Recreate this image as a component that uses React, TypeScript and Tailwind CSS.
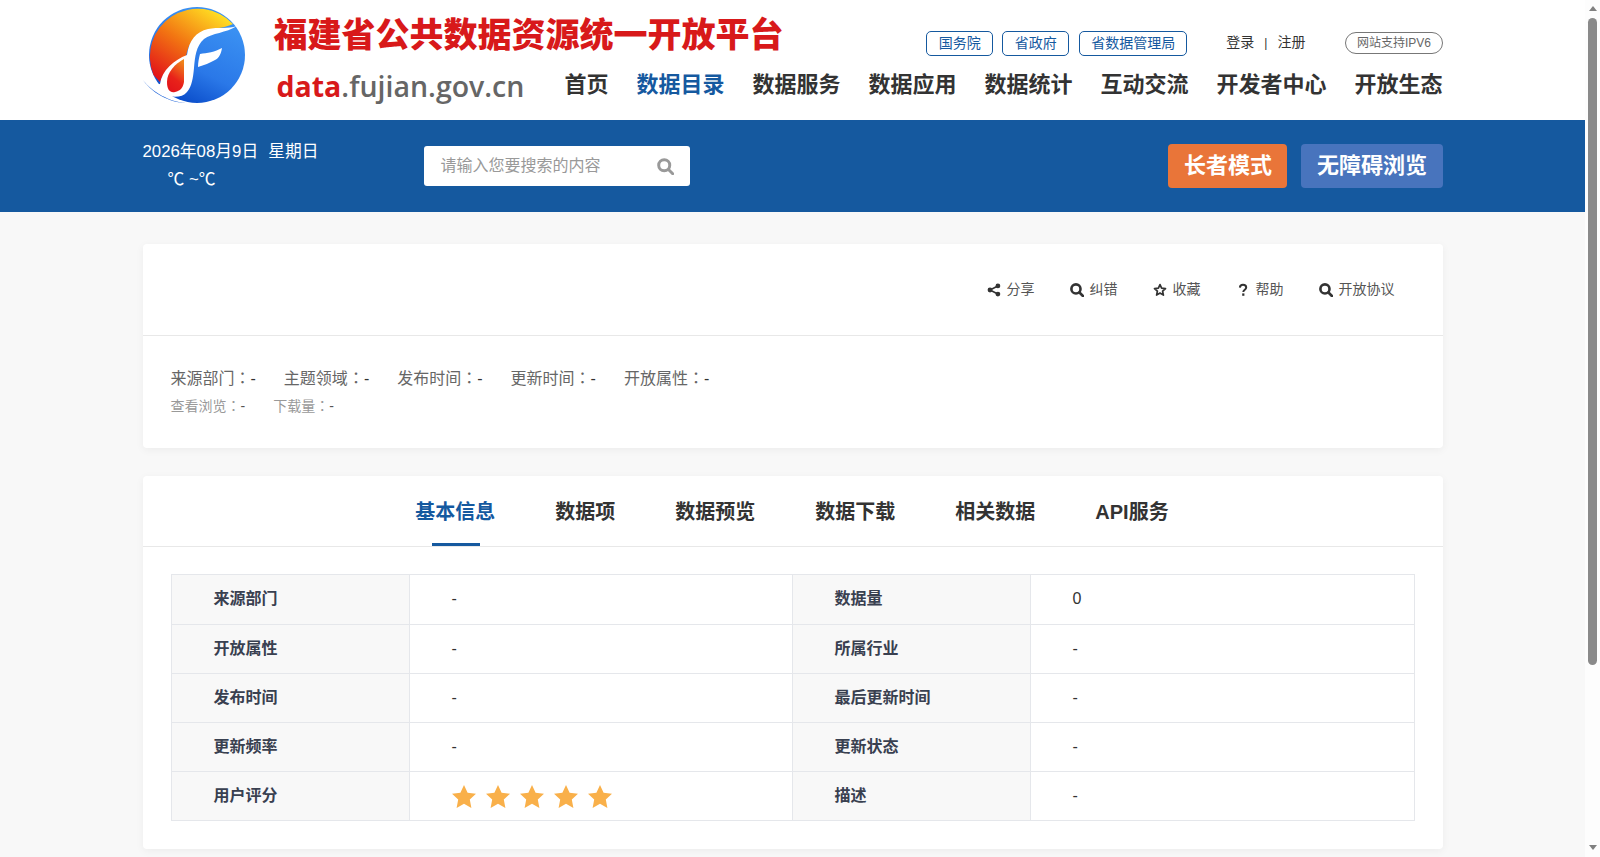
const NAV = ["首页", "数据目录", "数据服务", "数据应用", "数据统计", "互动交流", "开发者中心", "开放生态"];
const TABS = ["基本信息", "数据项", "数据预览", "数据下载", "相关数据", "API服务"];
const ROWS = [
  ["来源部门", "-", "数据量", "0"],
  ["开放属性", "-", "所属行业", "-"],
  ["发布时间", "-", "最后更新时间", "-"],
  ["更新频率", "-", "更新状态", "-"],
  ["用户评分", "stars", "描述", "-"],
];

function Logo() {
  return (
    <svg width="110" height="106" viewBox="0 0 110 106" className="shrink-0">
      <defs>
        <linearGradient id="warm" x1="0.1" y1="0.95" x2="0.8" y2="0.05">
          <stop offset="0" stopColor="#e2141a" />
          <stop offset="0.5" stopColor="#f27512" />
          <stop offset="1" stopColor="#ffdc22" />
        </linearGradient>
        <linearGradient id="note" x1="0.7" y1="0" x2="0.3" y2="1">
          <stop offset="0" stopColor="#f0841a" />
          <stop offset="0.6" stopColor="#e8221a" />
          <stop offset="1" stopColor="#e2141a" />
        </linearGradient>
        <linearGradient id="cool" x1="0.8" y1="0.2" x2="0.4" y2="1">
          <stop offset="0" stopColor="#3a90f2" />
          <stop offset="0.6" stopColor="#2a78e8" />
          <stop offset="1" stopColor="#0b4ecb" />
        </linearGradient>
      </defs>
      <circle cx="57" cy="53" r="48" fill="url(#cool)" />
      <path d="M93 22 A48 48 0 0 0 13.5 73 L20 80 C24 68 34 60 46 54 C49 40 55 32 68 28 C76 26 85 26 93 22Z" fill="url(#warm)" />
      <path d="M3 78 C8 85 14 90 22 92 C32 96 42 96 47 90 C52 84 53 76 54 66 C55 55 56 44 64 37 C72 31 86 31 97 24 C88 27 78 25 68 27 C56 30 49 38 47 53 C34 58 22 68 20 82 C14 83 8 81 3 78Z" fill="#ffffff" />
      <path d="M3 78 C12 90 30 100 46 101 C34 101 14 94 3 78Z" fill="#1c62d8" />
      <path d="M44 57 C35 62 27 70 27 80 C27 88 30 91 35 90 C40 89 43 86 44 80 C44 72 44 65 44 57Z" fill="url(#note)" />
      <path d="M60 52 C67 51 75 50 82 46 C81 52 79 56 75 58 C70 61 64 63 58 65 C58 60 59 56 60 52Z" fill="#ffffff" />
    </svg>
  );
}

function Star() {
  return (
    <svg width="24" height="23" viewBox="0 0 24 23" className="block">
      <polygon points="12,0 15.6,7.8 24,8.8 17.8,14.6 19.4,23 12,18.8 4.6,23 6.2,14.6 0,8.8 8.4,7.8" fill="#f9b04a" />
    </svg>
  );
}

function SearchIcon({ size = 14, color = "#333", width = 3 }: { size?: number; color?: string; width?: number }) {
  return (
    <svg width={size} height={size} viewBox="0 0 16 16" className="shrink-0">
      <circle cx="6.8" cy="6.8" r="5.2" fill="none" stroke={color} strokeWidth={width} />
      <path d="M10.8 10.8 L14.8 14.8" stroke={color} strokeWidth={width} strokeLinecap="round" />
    </svg>
  );
}

function ShareIcon() {
  return (
    <svg width="14" height="14" viewBox="0 0 14 14" className="shrink-0">
      <path d="M10.8 3 L3 7 L10.8 11" fill="none" stroke="#333" strokeWidth="1.6" />
      <circle cx="10.9" cy="2.9" r="2.4" fill="#333" />
      <circle cx="3" cy="7" r="2.4" fill="#333" />
      <circle cx="10.9" cy="11.1" r="2.4" fill="#333" />
    </svg>
  );
}

function StarOutline() {
  return (
    <svg width="14" height="14" viewBox="0 0 14 14" className="shrink-0">
      <polygon points="7,1.6 8.6,5.2 12.5,5.6 9.6,8.2 10.4,12.1 7,10.1 3.6,12.1 4.4,8.2 1.5,5.6 5.4,5.2" fill="none" stroke="#333" strokeWidth="1.7" strokeLinejoin="round" />
    </svg>
  );
}

function HelpIcon() {
  return (
    <svg width="14" height="14" viewBox="0 0 14 14" className="shrink-0">
      <path d="M3.9 4.6 C4 2.7 5.3 1.8 7 1.8 C8.8 1.8 10.2 2.9 10.2 4.5 C10.2 6.6 7.3 6.8 7.3 9" fill="none" stroke="#333" strokeWidth="2" />
      <rect x="6.2" y="10.4" width="2.2" height="2.4" fill="#333" />
    </svg>
  );
}

function ActionItem({ icon, label }: { icon: React.ReactNode; label: string }) {
  return (
    <div className="flex items-center gap-[6px] text-[14px] text-[#555]">
      {icon}
      <span>{label}</span>
    </div>
  );
}

function Colon() {
  return <span className="font-['Noto_Sans_CJK_TC',sans-serif]">：</span>;
}

function Scrollbar() {
  return (
    <div className="w-[15px] h-screen shrink-0 bg-[#fdfdfd] flex flex-col items-center">
      <div className="mt-[6px] w-0 h-0 border-x-[4.5px] border-x-transparent border-b-[5px] border-b-[#808080]" />
      <div className="mt-[7px] w-[9px] h-[647px] rounded-full bg-[#8a8a8a]" />
      <div className="mt-auto mb-[7px] w-0 h-0 border-x-[4.5px] border-x-transparent border-t-[5px] border-t-[#808080]" />
    </div>
  );
}

export default function App() {
  return (
    <div className="flex h-screen overflow-hidden bg-[#f8f8f8] font-['Liberation_Sans','Noto_Sans_CJK_SC',sans-serif] text-[#333]">
      <div className="flex-1 min-w-0">
        <header className="h-[120px] bg-white">
          <div className="w-[1300px] mx-auto flex pt-[2px]">
            <div className="-ml-[3px]">
              <Logo />
            </div>
            <div className="flex-1 min-w-0 ml-[24px]">
              <div className="h-[66px] flex justify-between items-start">
                <div className="pt-[10px] text-[34px] leading-[46px] font-black text-[#d8191a] whitespace-nowrap">
                  福建省公共数据资源统一开放平台
                </div>
                <div className="flex items-center h-[25px] mt-[29px]">
                  <a className="px-[11.5px] h-[25px] leading-[22px] border border-[#15599f] rounded-[5px] text-[14px] text-[#15599f]">国务院</a>
                  <a className="ml-[9px] px-[11.5px] h-[25px] leading-[22px] border border-[#15599f] rounded-[5px] text-[14px] text-[#15599f]">省政府</a>
                  <a className="ml-[10px] px-[11px] h-[25px] leading-[22px] border border-[#15599f] rounded-[5px] text-[14px] text-[#15599f]">省数据管理局</a>
                  <div className="ml-[39px] -mt-[2px] flex items-center text-[14px] text-[#333]">
                    <span>登录</span>
                    <span className="mx-[10px] text-[12px]">|</span>
                    <span>注册</span>
                  </div>
                  <div className="ml-[40px] -mt-[2px] h-[22px] px-[10.5px] leading-[20px] border border-[#777] rounded-full text-[12px] text-[#666] whitespace-nowrap">
                    网站支持IPV6
                  </div>
                </div>
              </div>
              <div className="flex justify-between items-start">
                <div className="pl-[3px] mt-[1px] text-[28.5px] leading-[34px] font-semibold text-[#666] font-['Open_Sans',sans-serif] whitespace-nowrap">
                  <span className="text-[#d8191a] font-bold">data</span>.fujian.gov.cn
                </div>
                <nav className="flex gap-[28px] text-[22px] leading-[34px] font-bold text-[#333] whitespace-nowrap">
                  {NAV.map((n) => (
                    <span key={n} className={n === "数据目录" ? "text-[#15599f]" : ""}>
                      {n}
                    </span>
                  ))}
                </nav>
              </div>
            </div>
          </div>
        </header>

        <div className="h-[92px] bg-[#15599f]">
          <div className="w-[1300px] mx-auto h-full flex items-center">
            <div className="w-[281px] text-white text-[16.8px] leading-[28px]">
              <div className="flex gap-[10px] whitespace-nowrap">
                <span>2026年08月9日</span>
                <span>星期日</span>
              </div>
              <div className="pl-[25px]">℃ ~℃</div>
            </div>
            <div className="w-[266px] h-[40px] bg-white rounded-[3px] flex items-center justify-between pl-[17px] pr-[16px]">
              <span className="text-[16px] text-[#999]">请输入您要搜索的内容</span>
              <SearchIcon size={17} color="#999" width={2.8} />
            </div>
            <div className="ml-auto flex gap-[14px] text-[22px] font-bold text-white">
              <div className="h-[44px] leading-[44px] px-[15.5px] rounded-[4px] bg-[#e97539]">长者模式</div>
              <div className="h-[44px] leading-[44px] px-[15.5px] rounded-[4px] bg-[#4874bd]">无障碍浏览</div>
            </div>
          </div>
        </div>

        <main className="w-[1300px] mx-auto pt-[32px]">
          <section className="bg-white rounded-[4px] shadow-[0_2px_8px_rgba(0,0,0,0.05)]">
            <div className="h-[92px] border-b border-[#e8e8e8] flex items-center justify-end gap-[35px] pr-[48px]">
              <ActionItem icon={<ShareIcon />} label="分享" />
              <ActionItem icon={<SearchIcon />} label="纠错" />
              <ActionItem icon={<StarOutline />} label="收藏" />
              <ActionItem icon={<HelpIcon />} label="帮助" />
              <ActionItem icon={<SearchIcon />} label="开放协议" />
            </div>
            <div className="h-[112px] px-[28px] pt-[27px]">
              <div className="flex gap-[28px] text-[16px] leading-[28px] text-[#666]">
                {["来源部门", "主题领域", "发布时间", "更新时间", "开放属性"].map((k) => (
                  <span key={k}>
                    {k}
                    <Colon />
                    <span className="text-[#333]">-</span>
                  </span>
                ))}
              </div>
              <div className="flex gap-[28px] text-[14px] leading-[28px] text-[#999] -mt-[2px]">
                <span>
                  查看浏览
                  <Colon />
                  <span className="text-[#555]">-</span>
                </span>
                <span>
                  下载量
                  <Colon />
                  <span className="text-[#555]">-</span>
                </span>
              </div>
            </div>
          </section>

          <section className="mt-[28px] bg-white rounded-[4px] shadow-[0_2px_8px_rgba(0,0,0,0.05)] pb-[28px]">
            <div className="h-[71px] border-b border-[#e8e8e8] flex justify-center gap-[60px] pr-[1px]">
              {TABS.map((t, i) => (
                <div
                  key={t}
                  className={`relative h-[70px] leading-[72px] text-[20px] font-bold ${i === 0 ? "text-[#15599f]" : "text-[#333]"}`}
                >
                  {t}
                  {i === 0 && (
                    <div className="absolute left-[17px] right-[15px] bottom-0 h-[3px] bg-[#15599f]" />
                  )}
                </div>
              ))}
            </div>
            <div className="mx-[28px] mt-[27px] border border-[#e5e7eb]">
              {ROWS.map((r, i) => (
                <div
                  key={r[0]}
                  className={`grid grid-cols-[238px_383px_238px_1fr] h-[49px] text-[16px] leading-[47px] ${i > 0 ? "border-t border-[#e5e7eb]" : ""}`}
                >
                  <div className="bg-[#f8f8f8] pl-[42px] font-bold text-[#394050] border-r border-[#e5e7eb]">{r[0]}</div>
                  <div className="pl-[42px] border-r border-[#e5e7eb]">
                    {r[1] === "stars" ? (
                      <div className="flex gap-[10px] pt-[13px]">
                        {[0, 1, 2, 3, 4].map((s) => (
                          <Star key={s} />
                        ))}
                      </div>
                    ) : (
                      r[1]
                    )}
                  </div>
                  <div className="bg-[#f8f8f8] pl-[42px] font-bold text-[#394050] border-r border-[#e5e7eb]">{r[2]}</div>
                  <div className="pl-[42px]">{r[3]}</div>
                </div>
              ))}
            </div>
          </section>
        </main>
      </div>
      <Scrollbar />
    </div>
  );
}
